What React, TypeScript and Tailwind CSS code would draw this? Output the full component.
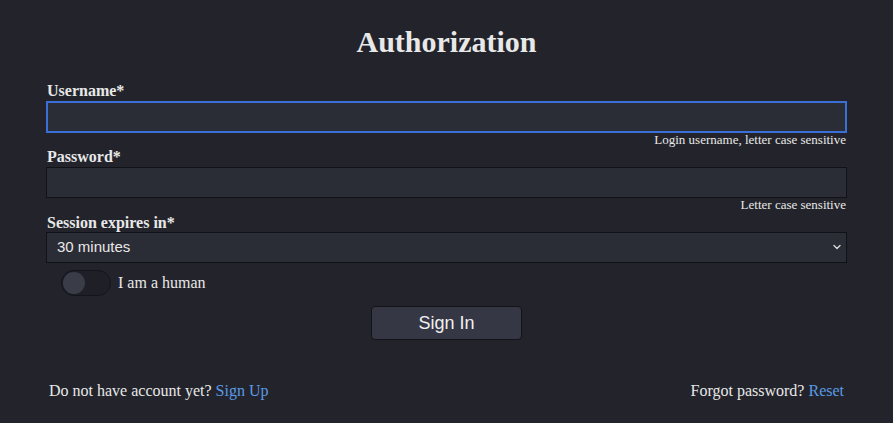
import { useState } from 'react'

export default function App() {
  const [human, setHuman] = useState(false)

  return (
    <div className="min-h-[423px] w-full bg-[#23242b] text-[#e8e8e8] font-['Liberation_Serif',serif]">
      <div className="px-[46px] pt-[24px]">
        <h1 className="text-center text-[30px] font-bold leading-[36px] mb-[20px]">Authorization</h1>

        {/* Username */}
        <label className="block text-[16px] font-bold leading-[18px] pt-[2px] pl-[1px]">Username*</label>
        <input
          autoFocus
          className="block w-full h-[32px] mt-[1px] bg-[#2b2d36] border-2 border-[#3b6fd8] outline-none px-[6px] text-[15px] text-[#e8e8e8]"
        />
        <div className="text-right text-[13px] leading-[13px] pr-[1px]">Login username, letter case sensitive</div>

        {/* Password */}
        <label className="block text-[16px] font-bold leading-[18px] pt-[2px] pl-[1px]">Password*</label>
        <input
          type="password"
          className="block w-full h-[31px] mt-[1px] bg-[#2b2d36] border border-[#111217] outline-none px-[6px] text-[15px]"
        />
        <div className="text-right text-[13px] leading-[14px] pr-[1px]">Letter case sensitive</div>

        {/* Session */}
        <label className="block text-[16px] font-bold leading-[18px] pt-[2px] pl-[1px]">Session expires in*</label>
        <div className="relative">
          <select className="block w-full h-[31px] appearance-none bg-[#2b2d36] border border-[#111217] outline-none pl-[10px] text-[15px] text-[#e8e8e8] font-['Liberation_Sans',sans-serif]">
            <option>30 minutes</option>
            <option>1 hour</option>
            <option>1 day</option>
          </select>
          <svg className="pointer-events-none absolute right-[6px] top-[12px]" width="8" height="6" viewBox="0 0 8 6" fill="none">
            <path d="M1 1.5L4 4.5L7 1.5" stroke="#d8d8d8" strokeWidth="1.4" strokeLinecap="round" strokeLinejoin="round" />
          </svg>
        </div>

        {/* Toggle */}
        <div className="flex items-center gap-[7px] mt-[7px] pl-[15px]">
          <button
            onClick={() => setHuman(!human)}
            className={`relative w-[50px] h-[26px] rounded-full border border-[#14151a] ${human ? 'bg-[#3b6fd8]' : 'bg-[#1f2027]'}`}
          >
            <span
              className={`absolute top-[1px] w-[22px] h-[22px] rounded-full bg-[#3a3c48] ${human ? 'left-[25px]' : 'left-[1px]'}`}
            />
          </button>
          <span className="text-[16px]">I am a human</span>
        </div>

        {/* Sign in */}
        <div className="flex justify-center mt-[10px]">
          <button className="w-[151px] h-[34px] rounded-[4px] bg-[#353744] border border-[#121318] text-[18px] text-[#f0f0f0] font-['Liberation_Sans',sans-serif]">
            Sign In
          </button>
        </div>

        {/* Footer */}
        <div className="flex justify-between mt-[39px] px-[3px] text-[16px]">
          <span>
            Do not have account yet? <a className="text-[#5b9ae6] cursor-pointer">Sign Up</a>
          </span>
          <span>
            Forgot password? <a className="text-[#5b9ae6] cursor-pointer">Reset</a>
          </span>
        </div>
      </div>
    </div>
  )
}
